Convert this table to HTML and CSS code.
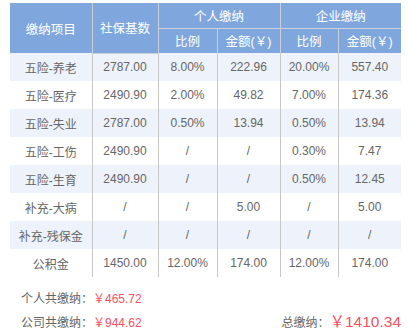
FILE: index.html
```html
<!DOCTYPE html>
<html>
<head>
  <meta charset="UTF-8">
  <title>社保缴纳明细</title>
  <link rel="stylesheet" href="styles.css">
</head>
<body>
  <div class="calc-result">
    <table class="pay-table">
      <colgroup>
        <col style="width: 82px">
        <col style="width: 66px">
        <col style="width: 59px">
        <col style="width: 63px">
        <col style="width: 58px">
        <col style="width: 63px">
      </colgroup>
      <thead>
        <tr class="head-top">
          <th rowspan="2">缴纳项目</th>
          <th rowspan="2" class="base-head">社保基数</th>
          <th colspan="2">个人缴纳</th>
          <th colspan="2">企业缴纳</th>
        </tr>
        <tr class="head-sub">
          <th>比例</th>
          <th>金额(￥)</th>
          <th>比例</th>
          <th>金额(￥)</th>
        </tr>
      </thead>
      <tbody>
        <tr><td>五险-养老</td><td>2787.00</td><td>8.00%</td><td>222.96</td><td>20.00%</td><td>557.40</td></tr>
        <tr><td>五险-医疗</td><td>2490.90</td><td>2.00%</td><td>49.82</td><td>7.00%</td><td>174.36</td></tr>
        <tr><td>五险-失业</td><td>2787.00</td><td>0.50%</td><td>13.94</td><td>0.50%</td><td>13.94</td></tr>
        <tr><td>五险-工伤</td><td>2490.90</td><td>/</td><td>/</td><td>0.30%</td><td>7.47</td></tr>
        <tr><td>五险-生育</td><td>2490.90</td><td>/</td><td>/</td><td>0.50%</td><td>12.45</td></tr>
        <tr><td>补充-大病</td><td>/</td><td>/</td><td>5.00</td><td>/</td><td>5.00</td></tr>
        <tr><td>补充-残保金</td><td>/</td><td>/</td><td>/</td><td>/</td><td>/</td></tr>
        <tr><td>公积金</td><td>1450.00</td><td>12.00%</td><td>174.00</td><td>12.00%</td><td>174.00</td></tr>
      </tbody>
    </table>

    <div class="summary">
      <div class="summary-left">
        <div class="sum-line">个人共缴纳：<span class="money">￥465.72</span></div>
        <div class="sum-line">公司共缴纳：<span class="money">￥944.62</span></div>
      </div>
      <div class="sum-total">总缴纳：<span class="money big">￥1410.34</span></div>
    </div>
  </div>
</body>
</html>
```

FILE: styles.css
```css
* {
  margin: 0;
  padding: 0;
  box-sizing: border-box;
}

body {
  font-family: "Liberation Sans", "Noto Sans CJK SC", sans-serif;
  background: #fff;
  color: #666;
}

.calc-result {
  padding: 3px 7px 0 10px;
}

.pay-table {
  width: 391px;
  border-collapse: collapse;
  table-layout: fixed;
  font-size: 12px;
  text-align: center;
}

.pay-table th {
  background: #80a7dd;
  color: #fff;
  font-weight: normal;
  font-size: 12.5px;
  border-left: 1px solid #c9d0db;
}

.pay-table th:first-child {
  border-left: none;
}

.head-top th {
  height: 25px;
}

.head-sub th {
  height: 25px;
  border-top: 1px solid #c9d0db;
}

.head-sub th:first-child {
  border-left: 1px solid #c9d0db;
}

.base-head {
  border-bottom: 1px solid #c9d0db;
}

.pay-table td {
  height: 28px;
  border-left: 1px solid #c8c8c8;
  color: #666;
}

.pay-table td:first-child {
  border-left: none;
}

.pay-table tbody tr:nth-child(odd) td {
  background: #eef3fb;
}

.summary {
  display: flex;
  justify-content: space-between;
  align-items: flex-end;
  padding: 10px 0 0 11px;
  font-size: 12px;
  color: #666;
}

.sum-line {
  height: 24px;
  line-height: 24px;
}

.money {
  color: #f5515f;
}

.sum-total {
  line-height: 24px;
}

.money.big {
  font-size: 15.5px;
}
```
